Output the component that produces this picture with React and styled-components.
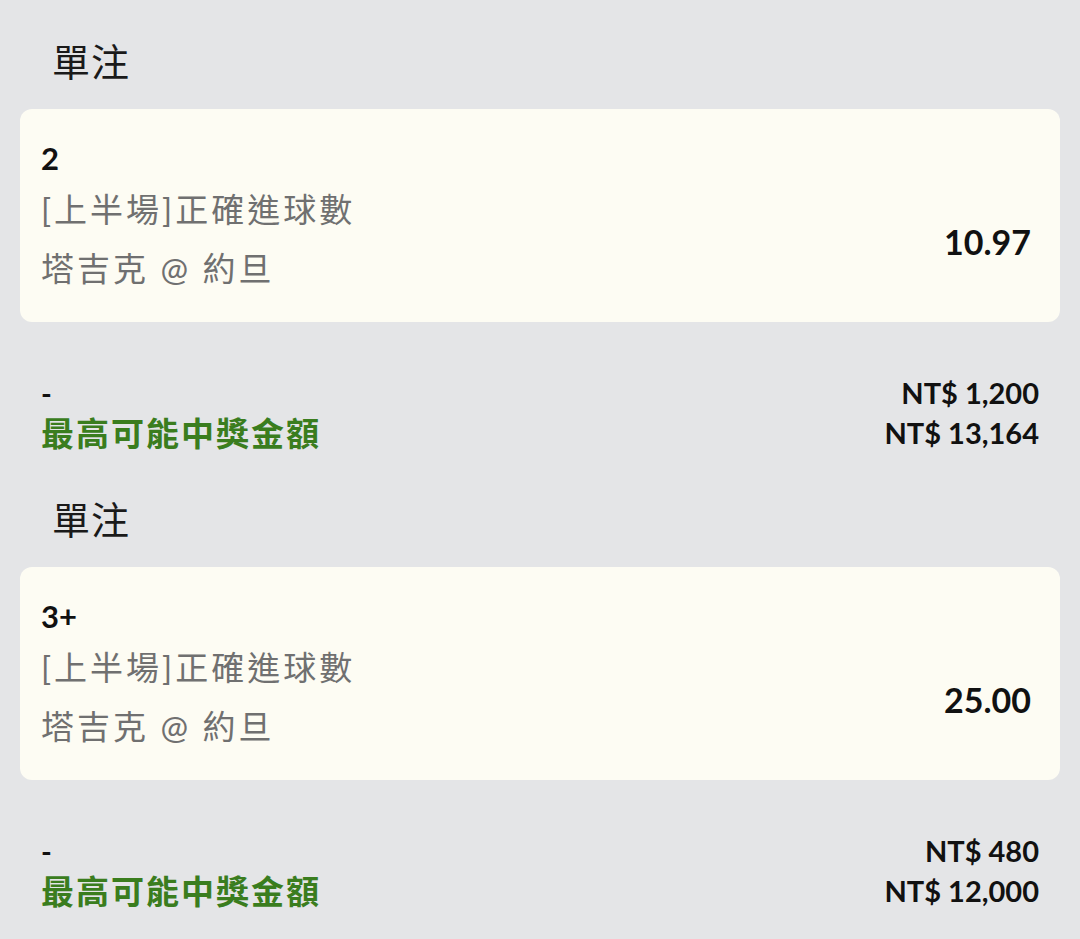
import React from 'react'
import styled, { createGlobalStyle } from 'styled-components'

const GlobalStyle = createGlobalStyle`
  body {
    margin: 0;
    background: #e4e5e7;
    font-family: Lato, "Noto Sans CJK TC", sans-serif;
  }
`

const Page = styled.div`
  padding: 35px 20px 0 21px;
`
const Section = styled.section`
  display: flex;
  flex-direction: column;
  margin-bottom: 41px;
`
const Title = styled.div`
  padding-left: 31px;
  height: 50px;
  line-height: 50px;
  font-size: 38px;
  letter-spacing: 1px;
  color: #1a1a1a;
  font-family: "Noto Sans CJK TC", sans-serif;
  margin-bottom: 24px;
`
const Card = styled.div`
  display: grid;
  grid-template-columns: 1fr auto;
  grid-template-rows: 50px 52px 60px;
  padding: 24px 29px 27px 21px;
  margin-left: -1px;
  background: #fdfcf3;
  border-radius: 12px;
`
const Pick = styled.div`
  grid-column: 1 / 3;
  line-height: 50px;
  font-size: 31px;
  font-weight: 700;
  color: #111;
`
const Info = styled.div`
  grid-column: 1;
  line-height: ${p => p.$lh}px;
  align-self: end;
  font-size: 33px;
  letter-spacing: 3px;
  color: #707070;
  font-family: Lato, "Noto Sans CJK TC", sans-serif;
`
const Odds = styled.div`
  grid-column: 2;
  grid-row: 2 / 4;
  align-self: center;
  padding-top: 4px;
  font-size: 34px;
  font-weight: 700;
  color: #111;
`
const Summary = styled.div`
  margin-top: 50px;
  display: grid;
  grid-template-columns: 1fr auto;
  grid-auto-rows: 40px;
  align-items: center;
  padding: 0 21px 0 20px;
`
const Dash = styled.div`
  font-size: 29px;
  font-weight: 700;
  color: #111;
`
const Label = styled.div`
  font-size: 33px;
  font-weight: 700;
  letter-spacing: 2px;
  color: #3a7d1e;
  font-family: "Noto Sans CJK TC", sans-serif;
`
const Amount = styled.div`
  text-align: right;
  font-size: 29px;
  font-weight: 700;
  color: #111;
`

const bets = [
  { pick: '2', odds: '10.97', stake: 'NT$ 1,200', win: 'NT$ 13,164' },
  { pick: '3+', odds: '25.00', stake: 'NT$ 480', win: 'NT$ 12,000' },
]

const App = () => (
  <Page>
    <GlobalStyle />
    {bets.map(b => (
      <Section key={b.pick}>
        <Title>單注</Title>
        <Card>
          <Pick>{b.pick}</Pick>
          <Info $lh={52}>[上半場]正確進球數</Info>
          <Info $lh={54}>塔吉克 @ 約旦</Info>
          <Odds>{b.odds}</Odds>
        </Card>
        <Summary>
          <Dash>-</Dash>
          <Amount>{b.stake}</Amount>
          <Label>最高可能中獎金額</Label>
          <Amount>{b.win}</Amount>
        </Summary>
      </Section>
    ))}
  </Page>
)

export default App
